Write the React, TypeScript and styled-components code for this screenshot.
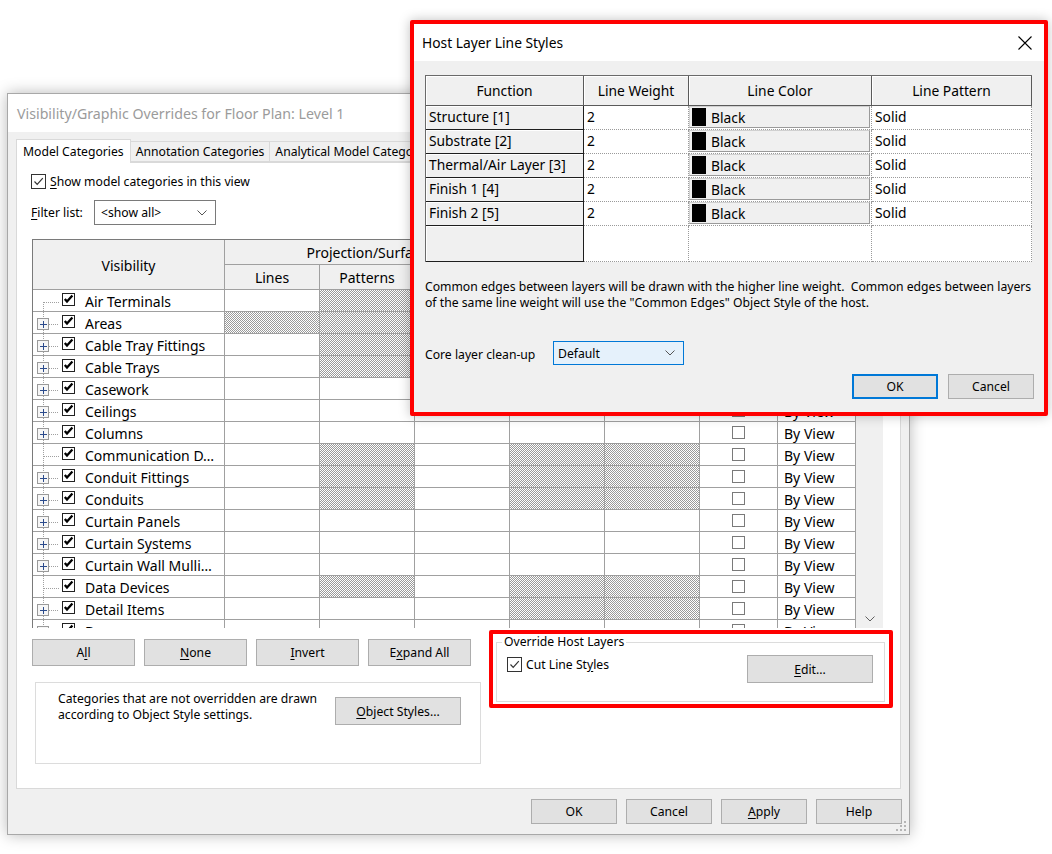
import React from "react";
import styled, { createGlobalStyle, css } from "styled-components";

const FONT = `"Noto Sans", "Open Sans", "DejaVu Sans", sans-serif`;
const UI_SIZE = "12.2px";

const GlobalStyle = createGlobalStyle`
  html, body { margin: 0; padding: 0; background: #fff; }
  body { font-family: ${FONT}; color: #000; }
  * { box-sizing: border-box; }
`;

const Desktop = styled.div`
  position: relative;
  width: 1052px;
  height: 854px;
  overflow: hidden;
  background: #fff;
`;

/* ---------- shared controls ---------- */

const Button = styled.button<{ $w: number; $h?: number; $primary?: boolean }>`
  flex: none;
  width: ${(p) => p.$w}px;
  height: ${(p) => p.$h ?? 25}px;
  padding: 0;
  background: #e1e1e1;
  border: 1px solid ${(p) => (p.$primary ? "#0078d7" : "#adadad")};
  ${(p) =>
    p.$primary &&
    css`
      box-shadow: inset 0 0 0 1px #0078d7;
    `}
  font-family: ${FONT};
  font-size: ${UI_SIZE};
  color: #000;
  u {
    text-decoration: underline;
    text-underline-offset: 2px;
  }
`;

const FlatCheck = styled.span`
  flex: none;
  width: 15px;
  height: 15px;
  border: 1px solid #333;
  background: #fff;
  display: inline-flex;
  align-items: center;
  justify-content: center;
`;

const GridCheck = styled.span<{ $on?: boolean }>`
  flex: none;
  width: 13px;
  height: 13px;
  border: 1px solid ${(p) => (p.$on ? "#222" : "#7a7a7a")};
  background: #fff;
  display: inline-flex;
  align-items: center;
  justify-content: center;
`;

const ThinTick = () => (
  <svg width="13" height="13" viewBox="0 0 13 13">
    <polyline points="2.5,6.5 5.2,9.3 10.8,3.2" fill="none" stroke="#333" strokeWidth="1.2" />
  </svg>
);

const BoldTick = () => (
  <svg width="11" height="11" viewBox="0 0 11 11">
    <polyline points="1.8,5 4,7.6 9.4,1.6" fill="none" stroke="#000" strokeWidth="2.3" />
  </svg>
);

const Chevron = ({ color = "#555" }: { color?: string }) => (
  <svg width="10" height="6" viewBox="0 0 10 6">
    <polyline points="0.5,0.5 5,5 9.5,0.5" fill="none" stroke={color} strokeWidth="1" />
  </svg>
);

/* ---------- windows ---------- */

const Window = styled.div<{ $x: number; $y: number; $w: number; $h: number }>`
  position: absolute;
  left: ${(p) => p.$x}px;
  top: ${(p) => p.$y}px;
  width: ${(p) => p.$w}px;
  height: ${(p) => p.$h}px;
  display: flex;
  flex-direction: column;
  background: #f0f0f0;
  border: 1px solid #a8a8a8;
  box-shadow: 0 0 14px rgba(0, 0, 0, 0.28);
`;

const HighlightWindow = styled(Window)`
  border: 4px solid #ff0000;
  border-radius: 2px;
  box-shadow: 0 0 12px rgba(0, 0, 0, 0.25);
`;

const TitleBar = styled.div<{ $inactive?: boolean; $h: number }>`
  flex: none;
  height: ${(p) => p.$h}px;
  background: #fff;
  display: flex;
  align-items: center;
  justify-content: space-between;
  padding: 0 12px 0 ${(p) => (p.$inactive ? 9 : 8)}px;
  font-size: ${(p) => (p.$inactive ? 14.2 : 13.8)}px;
  color: ${(p) => (p.$inactive ? "#9b9b9b" : "#000")};
  white-space: nowrap;
`;

const ResizeGrip = styled.svg`
  position: absolute;
  right: 2px;
  bottom: 2px;
`;

/* ---------- back dialog ---------- */

const BackBody = styled.div`
  flex: 1;
  display: flex;
  flex-direction: column;
  padding: 7px 8px 0 8px;
`;

const TabStrip = styled.div`
  display: flex;
  align-items: flex-end;
  height: 23px;
`;

const Tab = styled.div<{ $active?: boolean }>`
  position: relative;
  height: ${(p) => (p.$active ? 24 : 21)}px;
  margin-bottom: ${(p) => (p.$active ? -1 : 0)}px;
  margin-right: -1px;
  padding: 0 ${(p) => (p.$active ? 6 : 5)}px;
  display: flex;
  align-items: center;
  background: ${(p) => (p.$active ? "#fff" : "#f0f0f0")};
  border: 1px solid #d9d9d9;
  border-bottom: ${(p) => (p.$active ? "none" : "1px solid #d9d9d9")};
  z-index: ${(p) => (p.$active ? 1 : 0)};
  font-size: ${UI_SIZE};
  white-space: nowrap;
`;

const TabPanel = styled.div`
  height: 627px;
  background: #fff;
  border: 1px solid #d9d9d9;
  display: flex;
  flex-direction: column;
  padding: 11px 0 0 14px;
  font-size: ${UI_SIZE};
`;

const OptionRow = styled.label`
  display: flex;
  align-items: center;
  gap: 4px;
  height: 15px;
  white-space: nowrap;
  u {
    text-underline-offset: 2px;
  }
`;

const FilterRow = styled.div`
  margin-top: 11px;
  display: flex;
  align-items: center;
  height: 25px;
  u {
    text-underline-offset: 2px;
  }
`;

const FilterLabel = styled.span`
  width: 63px;
`;

const Select = styled.div<{ $w: number; $h: number; $focus?: boolean }>`
  width: ${(p) => p.$w}px;
  height: ${(p) => p.$h}px;
  display: flex;
  align-items: center;
  justify-content: space-between;
  padding: 0 8px 0 ${(p) => (p.$focus ? 4 : 6)}px;
  background: ${(p) => (p.$focus ? "#e5f1fb" : "#fff")};
  border: 1px solid ${(p) => (p.$focus ? "#0078d7" : "#7a7a7a")};
  font-size: ${UI_SIZE};
`;

/* category grid */

const TableFrame = styled.div`
  margin: 14px 0 0 1px;
  width: 851px;
  height: 389px;
  display: flex;
  overflow: hidden;
  border-top: 1px solid #7a7a7a;
`;

const Grid = styled.div`
  flex: none;
  width: 824px;
  display: grid;
  grid-template-columns: 192px 95px 95px 95px 95px 95px 78px 78px;
  grid-template-rows: 25px 25px;
  grid-auto-rows: 22px;
  border-left: 1px solid #7a7a7a;
  font-size: 14px;
`;

const HeadCell = styled.div<{ $rows?: number; $cols?: number }>`
  grid-row: span ${(p) => p.$rows ?? 1};
  grid-column: span ${(p) => p.$cols ?? 1};
  display: flex;
  align-items: center;
  justify-content: center;
  padding-top: 1px;
  background: #f0f0f0;
  border-right: 1px solid #a0a0a0;
  border-bottom: 1px solid #a0a0a0;
  white-space: nowrap;
  overflow: hidden;
`;

const Cell = styled.div<{ $hatch?: boolean }>`
  display: flex;
  align-items: center;
  background-color: #fff;
  border-right: 1px solid #a0a0a0;
  border-bottom: 1px solid #a0a0a0;
  ${(p) =>
    p.$hatch &&
    css`
      background-image: repeating-conic-gradient(#9a9a9a 0% 25%, #ffffff 0% 50%);
      background-size: 2px 2px;
    `}
`;

const NameCell = styled(Cell)`
  align-items: flex-start;
  white-space: nowrap;
`;

const NameCheck = styled(GridCheck)`
  margin-top: 3px;
`;

const NameText = styled.span`
  margin-left: 10px;
  padding-top: 1px;
  line-height: 21px;
`;

const CenterCell = styled(Cell)`
  justify-content: center;
`;

const TextCell = styled(Cell)`
  padding: 1px 0 0 6px;
  white-space: nowrap;
`;

const ScrollTrack = styled.div`
  flex: none;
  width: 27px;
  background: #f0f0f0;
  display: flex;
  flex-direction: column;
  justify-content: flex-end;
  align-items: center;
  padding-bottom: 6px;
`;

/* lower area */

const LowerArea = styled.div`
  display: flex;
  align-items: flex-start;
`;

const LeftColumn = styled.div`
  width: 450px;
  margin-left: 1px;
  padding-top: 11px;
`;

const ButtonRow = styled.div<{ $gap: number }>`
  display: flex;
  gap: ${(p) => p.$gap}px;
  justify-content: flex-end;
`;

const LeftButtons = styled(ButtonRow)`
  justify-content: flex-start;
`;

const InfoBox = styled.div`
  margin: 16px 0 0 3px;
  width: 446px;
  height: 82px;
  border: 1px solid #dcdcdc;
  display: flex;
  align-items: flex-start;
  padding: 8px 0 0 22px;
`;

const InfoText = styled.p`
  margin: 0;
  width: 268px;
  margin-right: 9px;
  line-height: 16px;
`;

const InfoButton = styled(Button)`
  margin-top: 6px;
`;

const HighlightFrame = styled.div`
  margin: 2px 0 0 7px;
  width: 404px;
  height: 78px;
  border: 4px solid #ff0000;
  border-radius: 2px;
  padding: 0 4px 0 3px;
`;

const GroupBox = styled.fieldset`
  margin: 0;
  height: 68px;
  padding: 0 11px 0 10px;
  border: 1px solid #dcdcdc;
  min-width: 0;
`;

const GroupLegend = styled.legend`
  margin-left: -5px;
  padding: 0 2px;
  line-height: 16px;
  font-size: ${UI_SIZE};
`;

const GroupRow = styled.div`
  display: flex;
  justify-content: space-between;
  align-items: flex-start;
`;

const GroupCheck = styled(OptionRow)`
  margin-top: 7px;
`;

const GroupButton = styled(Button)`
  margin-top: 5px;
`;

const Footer = styled(ButtonRow)`
  margin: 10px -1px 0 0;
`;

/* ---------- front dialog ---------- */

const FrontBody = styled.div`
  flex: 1;
  display: flex;
  flex-direction: column;
  padding: 14px 10px 0 11px;
  font-size: ${UI_SIZE};
`;

const LayerGrid = styled.div`
  width: 607px;
  display: grid;
  grid-template-columns: 158px 105px 183px 160px;
  grid-template-rows: 30px repeat(5, 24px) 36px;
  border-left: 1px solid #6a6a6a;
  border-top: 1px solid #6a6a6a;
  font-size: 13.8px;
`;

const LayerHead = styled.div`
  display: flex;
  align-items: center;
  justify-content: center;
  background: #f0f0f0;
  border-right: 1px solid #5a5a5a;
  border-bottom: 1px solid #5a5a5a;
  box-shadow: inset 1px 1px 0 #fff;
`;

const LayerName = styled.div`
  display: flex;
  align-items: center;
  padding: 0 0 3px 3px;
  background: #f0f0f0;
  border-right: 1px solid #1e1e1e;
  border-bottom: 1px solid #1e1e1e;
  box-shadow: inset 1px 1px 0 #fff;
  white-space: nowrap;
`;

const LayerCell = styled.div`
  display: flex;
  align-items: center;
  padding: 0 0 3px 3px;
  background: #fff;
  border-right: 1px dotted #9a9a9a;
  border-bottom: 1px dotted #9a9a9a;
`;

const ColorCell = styled(LayerCell)`
  padding: 0 1px 1px 0;
  align-items: stretch;
`;

const ColorButton = styled.div`
  flex: 1;
  display: flex;
  align-items: center;
  padding-left: 2px;
  background: #f0f0f0;
  border: 1px solid #d0d0d0;
  border-right-color: #9a9a9a;
  border-bottom-color: #9a9a9a;
`;

const Swatch = styled.span`
  width: 14px;
  height: 18px;
  background: #000;
  margin-right: 5px;
`;

const ColorLabel = styled.span`
  padding-top: 1px;
`;

const Note = styled.p`
  margin: 17px 0 0;
  line-height: 16px;
  white-space: nowrap;
`;

const CleanupRow = styled.div`
  margin-top: 30px;
  display: flex;
  align-items: center;
`;

const CleanupLabel = styled.span`
  width: 128px;
  padding-top: 3px;
`;

const FrontButtons = styled(ButtonRow)`
  margin-top: 9px;
`;

/* ---------- data ---------- */

type Category = { name: string; expand: boolean; hatch: number[] };

const CATEGORIES: Category[] = [
  { name: "Air Terminals", expand: false, hatch: [0, 1, 0, 1, 1] },
  { name: "Areas", expand: true, hatch: [1, 1, 1, 1, 1] },
  { name: "Cable Tray Fittings", expand: true, hatch: [0, 1, 0, 1, 1] },
  { name: "Cable Trays", expand: true, hatch: [0, 1, 0, 1, 1] },
  { name: "Casework", expand: true, hatch: [0, 0, 0, 0, 0] },
  { name: "Ceilings", expand: true, hatch: [0, 0, 0, 0, 0] },
  { name: "Columns", expand: true, hatch: [0, 0, 0, 0, 0] },
  { name: "Communication D…", expand: false, hatch: [0, 1, 0, 1, 1] },
  { name: "Conduit Fittings", expand: true, hatch: [0, 1, 0, 1, 1] },
  { name: "Conduits", expand: true, hatch: [0, 1, 0, 1, 1] },
  { name: "Curtain Panels", expand: true, hatch: [0, 0, 0, 0, 0] },
  { name: "Curtain Systems", expand: true, hatch: [0, 0, 0, 0, 0] },
  { name: "Curtain Wall Mulli…", expand: true, hatch: [0, 0, 0, 0, 0] },
  { name: "Data Devices", expand: false, hatch: [0, 1, 0, 1, 1] },
  { name: "Detail Items", expand: true, hatch: [0, 0, 0, 1, 1] },
  { name: "Doors", expand: true, hatch: [0, 0, 0, 0, 0] },
];

const LAYERS = ["Structure [1]", "Substrate [2]", "Thermal/Air Layer [3]", "Finish 1 [4]", "Finish 2 [5]"];

/* tree connector drawn in front of each category checkbox */
const TreeGlyph = ({ expand, first }: { expand: boolean; first: boolean }) => (
  <svg width="29" height="21" viewBox="0 0 29 21" style={{ flex: "none" }}>
    <line x1="10.5" y1={first ? 12 : 0} x2="10.5" y2="21" stroke="#a0a0a0" strokeDasharray="1 1" />
    <line x1={expand ? 16 : 11} y1="12.5" x2="26" y2="12.5" stroke="#a0a0a0" strokeDasharray="1 1" />
    {expand && (
      <>
        <rect x="4.5" y="6.5" width="11" height="11" fill="#f6f6f6" stroke="#9a9a9a" />
        <path d="M7 12.5h7M10.5 9v7" stroke="#2b4b8c" />
      </>
    )}
  </svg>
);

const CategoryRow = ({ cat, index }: { cat: Category; index: number }) => (
  <>
    <NameCell>
      <TreeGlyph expand={cat.expand} first={index === 0} />
      <NameCheck $on>
        <BoldTick />
      </NameCheck>
      <NameText>{cat.name}</NameText>
    </NameCell>
    {cat.hatch.map((h, i) => (
      <Cell key={i} $hatch={h === 1} />
    ))}
    <CenterCell>
      <GridCheck />
    </CenterCell>
    <TextCell>By View</TextCell>
  </>
);

const BackDialog = () => (
  <Window $x={7} $y={93} $w={903} $h={742}>
    <TitleBar $inactive $h={38}>
      Visibility/Graphic Overrides for Floor Plan: Level 1
    </TitleBar>
    <BackBody>
      <TabStrip>
        <Tab $active>Model Categories</Tab>
        <Tab>Annotation Categories</Tab>
        <Tab>Analytical Model Categories</Tab>
        <Tab>Imported Categories</Tab>
        <Tab>Filters</Tab>
      </TabStrip>
      <TabPanel>
        <OptionRow>
          <FlatCheck>
            <ThinTick />
          </FlatCheck>
          <span>
            <u>S</u>how model categories in this view
          </span>
        </OptionRow>
        <FilterRow>
          <FilterLabel>
            <u>F</u>ilter list:
          </FilterLabel>
          <Select $w={122} $h={25}>
            <span>&lt;show all&gt;</span>
            <Chevron />
          </Select>
        </FilterRow>

        <TableFrame>
          <Grid>
            <HeadCell $rows={2}>Visibility</HeadCell>
            <HeadCell $cols={3}>Projection/Surface</HeadCell>
            <HeadCell $cols={2}>Cut</HeadCell>
            <HeadCell $rows={2}>Halftone</HeadCell>
            <HeadCell $rows={2}>Detail Level</HeadCell>
            <HeadCell>Lines</HeadCell>
            <HeadCell>Patterns</HeadCell>
            <HeadCell>Transparency</HeadCell>
            <HeadCell>Lines</HeadCell>
            <HeadCell>Patterns</HeadCell>
            {CATEGORIES.map((c, i) => (
              <CategoryRow key={c.name} cat={c} index={i} />
            ))}
          </Grid>
          <ScrollTrack>
            <Chevron color="#606060" />
          </ScrollTrack>
        </TableFrame>

        <LowerArea>
          <LeftColumn>
            <LeftButtons $gap={9}>
              <Button $w={103} $h={27}>
                A<u>l</u>l
              </Button>
              <Button $w={103} $h={27}>
                <u>N</u>one
              </Button>
              <Button $w={103} $h={27}>
                <u>I</u>nvert
              </Button>
              <Button $w={103} $h={27}>
                E<u>x</u>pand All
              </Button>
            </LeftButtons>
            <InfoBox>
              <InfoText>
                Categories that are not overridden are drawn according to Object Style settings.
              </InfoText>
              <InfoButton $w={126} $h={28}>
                <u>O</u>bject Styles...
              </InfoButton>
            </InfoBox>
          </LeftColumn>
          <HighlightFrame>
            <GroupBox>
              <GroupLegend>Override Host Layers</GroupLegend>
              <GroupRow>
                <GroupCheck>
                  <FlatCheck>
                    <ThinTick />
                  </FlatCheck>
                  <span>
                    Cut Line St<u>y</u>les
                  </span>
                </GroupCheck>
                <GroupButton $w={126} $h={28}>
                  <u>E</u>dit...
                </GroupButton>
              </GroupRow>
            </GroupBox>
          </HighlightFrame>
        </LowerArea>
      </TabPanel>
      <Footer $gap={9}>
        <Button $w={86}>OK</Button>
        <Button $w={86}>Cancel</Button>
        <Button $w={86}>
          <u>A</u>pply
        </Button>
        <Button $w={86}>Help</Button>
      </Footer>
    </BackBody>
    <ResizeGrip width="11" height="11" viewBox="0 0 11 11">
      {[
        [8, 0],
        [8, 4],
        [4, 4],
        [8, 8],
        [4, 8],
        [0, 8],
      ].map(([x, y]) => (
        <rect key={`${x}-${y}`} x={x} y={y} width="2" height="2" fill="#b5b5b5" />
      ))}
    </ResizeGrip>
  </Window>
);

const FrontDialog = () => (
  <HighlightWindow $x={410} $y={20} $w={638} $h={396}>
    <TitleBar $h={37}>
      <span>Host Layer Line Styles</span>
      <svg width="14" height="14" viewBox="0 0 14 14">
        <path d="M0.5 0.5L13.5 13.5M13.5 0.5L0.5 13.5" stroke="#000" strokeWidth="1.1" />
      </svg>
    </TitleBar>
    <FrontBody>
      <LayerGrid>
        <LayerHead>Function</LayerHead>
        <LayerHead>Line Weight</LayerHead>
        <LayerHead>Line Color</LayerHead>
        <LayerHead>Line Pattern</LayerHead>
        {LAYERS.map((name) => (
          <React.Fragment key={name}>
            <LayerName>{name}</LayerName>
            <LayerCell>2</LayerCell>
            <ColorCell>
              <ColorButton>
                <Swatch />
                <ColorLabel>Black</ColorLabel>
              </ColorButton>
            </ColorCell>
            <LayerCell>Solid</LayerCell>
          </React.Fragment>
        ))}
        <LayerName />
        <LayerCell />
        <LayerCell />
        <LayerCell />
      </LayerGrid>
      <Note>
        Common edges between layers will be drawn with the higher line weight.&nbsp; Common edges between layers
        <br />
        of the same line weight will use the "Common Edges" Object Style of the host.
      </Note>
      <CleanupRow>
        <CleanupLabel>Core layer clean-up</CleanupLabel>
        <Select $w={131} $h={24} $focus>
          <span>Default</span>
          <Chevron />
        </Select>
      </CleanupRow>
      <FrontButtons $gap={10}>
        <Button $w={86} $primary>
          OK
        </Button>
        <Button $w={86}>Cancel</Button>
      </FrontButtons>
    </FrontBody>
  </HighlightWindow>
);

export default function App() {
  return (
    <>
      <GlobalStyle />
      <Desktop>
        <BackDialog />
        <FrontDialog />
      </Desktop>
    </>
  );
}
